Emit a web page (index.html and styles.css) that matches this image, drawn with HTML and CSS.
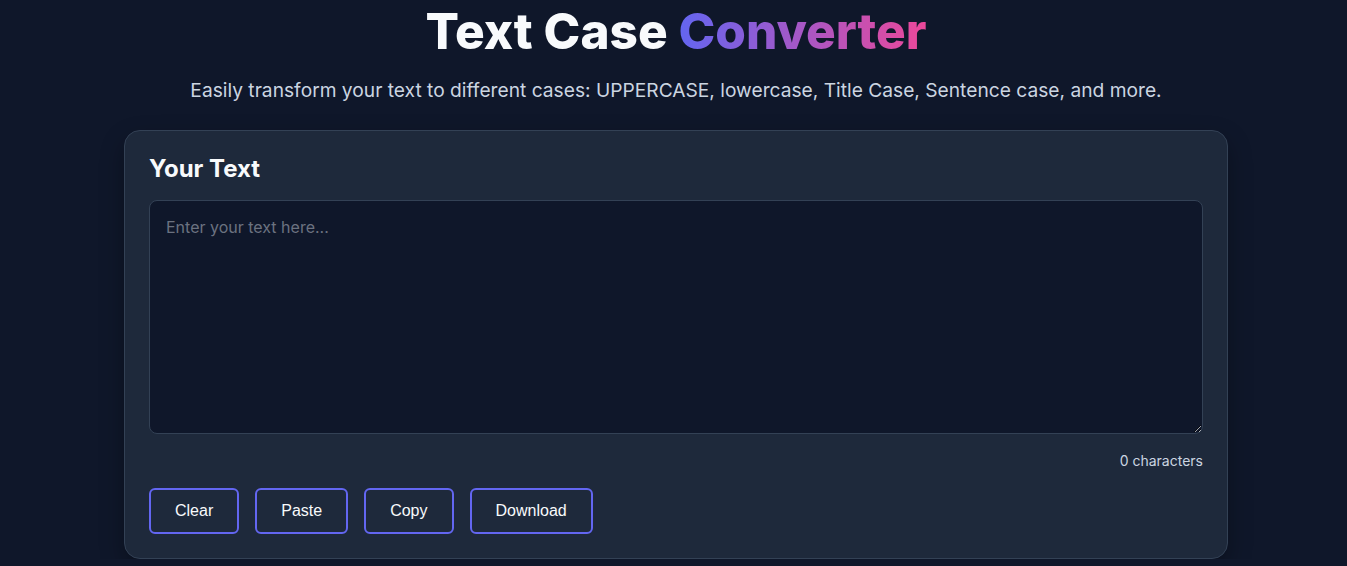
FILE: index.html
```html
<!DOCTYPE html>
<html lang="en">
<head>
<meta charset="utf-8">
<title>Text Case Converter</title>
<link rel="stylesheet" href="styles.css">
</head>
<body>
<main class="page">
  <header class="hero">
    <h1 class="title">Text Case <span class="grad">Converter</span></h1>
    <p class="subtitle">Easily transform your text to different cases: UPPERCASE, lowercase, Title Case, Sentence case, and more.</p>
  </header>
  <section class="card">
    <h2 class="card-title">Your Text</h2>
    <textarea class="input" placeholder="Enter your text here..."></textarea>
    <div class="count">0 characters</div>
    <div class="actions">
      <button class="btn">Clear</button>
      <button class="btn">Paste</button>
      <button class="btn">Copy</button>
      <button class="btn">Download</button>
    </div>
  </section>
</main>
</body>
</html>
```
FILE: styles.css
```css
* { box-sizing: border-box; }
html, body { margin: 0; padding: 0; }
body {
  background: #0f172a;
  color: #f8fafc;
  font-family: Inter, "Noto Sans", sans-serif;
  overflow: hidden;
}
.page {
  display: flex;
  flex-direction: column;
  align-items: center;
  padding: 2px 0 0 5px;
}
.hero { text-align: center; }
.title {
  margin: 0;
  font-family: Inter, sans-serif;
  font-weight: 800;
  font-size: 49.5px;
  line-height: 58px;
  color: #f8fafc;
}
.grad {
  background: linear-gradient(90deg, #6366f1, #ec4899);
  -webkit-background-clip: text;
  background-clip: text;
  color: transparent;
}
.subtitle {
  margin: 16px 0 0;
  font-size: 19.2px;
  line-height: 28px;
  color: #cbd5e1;
}
.card {
  margin-top: 26px;
  width: 1104px;
  background: #1e293b;
  border: 1px solid #334155;
  border-radius: 16px;
  padding: 24px;
  box-shadow: 0 10px 25px rgba(0,0,0,0.3);
}
.card-title {
  margin: 0 0 17px;
  font-family: Inter, sans-serif;
  font-weight: 700;
  font-size: 24px;
  line-height: 28px;
  color: #f8fafc;
}
.input {
  display: block;
  width: 100%;
  height: 234px;
  background: #0f172a;
  border: 1px solid #334155;
  border-radius: 8px;
  padding: 14px 16px;
  color: #f8fafc;
  font-family: Inter, sans-serif;
  font-size: 16px;
  line-height: 1.5;
  resize: vertical;
  outline: none;
}
.input::placeholder { color: #6b7280; }
.count {
  margin-top: 18px;
  text-align: right;
  font-size: 14px;
  line-height: 18px;
  color: #cbd5e1;
}
.actions {
  display: flex;
  gap: 16px;
  margin-top: 18px;
}
.btn {
  font-family: "Liberation Sans", Arial, sans-serif;
  font-size: 16px;
  line-height: 18px;
  padding: 12px 24px;
  background: transparent;
  color: #f8fafc;
  border: 2px solid #6366f1;
  border-radius: 6px;
  cursor: pointer;
}
```
